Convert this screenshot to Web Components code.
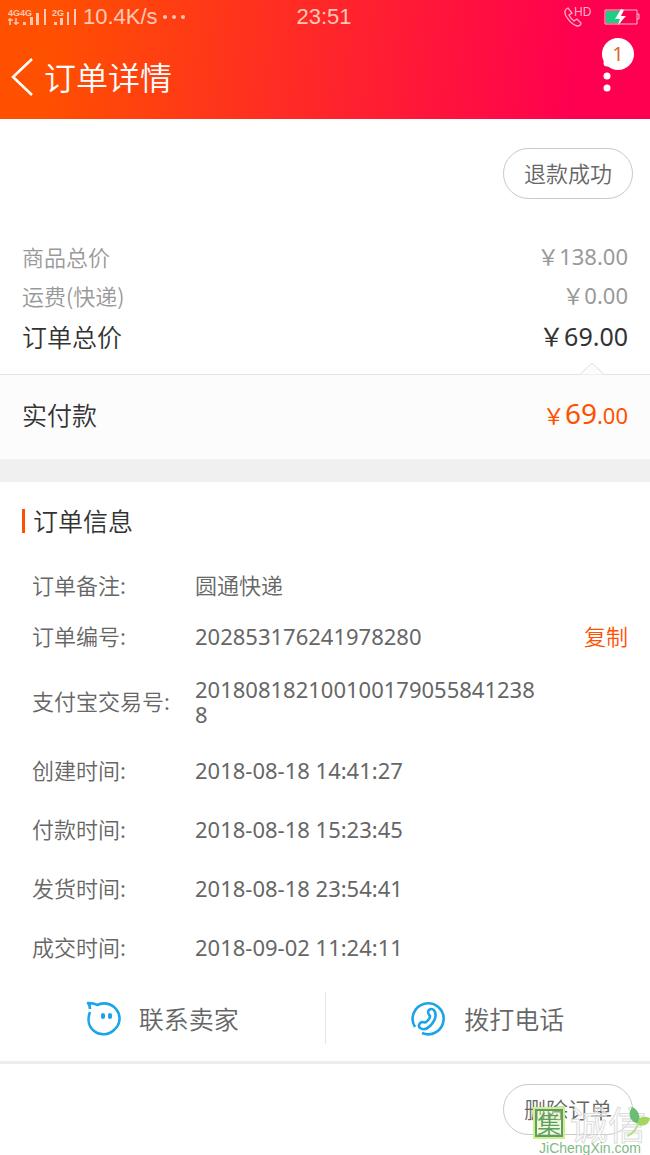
<!DOCTYPE html>
<html lang="zh-CN">
<head>
<meta charset="utf-8">
<meta name="viewport" content="width=device-width, initial-scale=1">
<title>订单详情</title>
<style>
  body {
    margin: 0;
    background: #fff;
    color: #666;
    font: 350 22px/25px "Noto Sans", "Noto Sans CJK SC", sans-serif;
  }
</style>
</head>
<body>
<order-page></order-page>

<script>
  class StatusBar extends HTMLElement {
    constructor() {
      super();
      this.attachShadow({ mode: 'open' });
    }

    connectedCallback() {
      this.shadowRoot.innerHTML = `
        <style>
          :host {
            display: grid;
            grid-template-columns: 1fr auto 1fr;
            align-items: center;
            height: 34px;
            padding: 0 10px 0 8px;
            color: #ffc9b5;
            font: 22px/34px "Liberation Sans", Arial, sans-serif;
          }
          .side { display: flex; align-items: center; }
          .end { justify-content: flex-end; gap: 13px; }
          .speed { margin: 0 5px 0 6px; }
          svg { display: block; }
          svg text { font: 700 9px "Liberation Sans", Arial, sans-serif; }
        </style>
        <div class="side">
          <svg width="69" height="20" viewBox="0 0 69 20" fill="currentColor">
            <text x="0" y="9">4G4G</text>
            <path d="M2 11v7M0 13h5M8 11v7M6 16h5" stroke="currentColor" stroke-width="1.5"/>
            <path d="M15 15h3v3h-3zM22 10h3v8h-3zM28 6h3v12h-3zM36 2h2v16h-2z"/>
            <text x="44" y="9">2G</text>
            <path d="M46 15h3v3h-3zM52 11h3v7h-3zM59 5h2v13h-2zM66 2h2v16h-2z"/>
          </svg>
          <span class="speed">10.4K/s</span>
          <svg width="22" height="4" viewBox="0 0 22 4" fill="currentColor">
            <circle cx="2" cy="2" r="2"/><circle cx="11" cy="2" r="2"/><circle cx="20" cy="2" r="2"/>
          </svg>
        </div>
        <span>23:51</span>
        <div class="side end">
          <svg width="27" height="22" viewBox="0 0 27 22" fill="none" stroke="#ffb3c6" stroke-width="1.3">
            <path d="M4 2C1 3 0 6 2 10c3 5 7 9 11 10 2 0 4-1 4-3l-4-4-3 2c-2-1-4-4-5-6l3-2z"/>
            <text x="10" y="10" fill="#ffb3c6" stroke="none" style="font-weight:400;font-size:12px">HD</text>
          </svg>
          <svg width="36" height="18" viewBox="0 0 36 18">
            <path d="M1 2h32v14H1zM33 6h2v5h-2" fill="none" stroke="#ffc2cd"/>
            <path d="M2 3h15v12H2z" fill="#1fce85"/>
            <path d="M17 1l-6 10h5l-2 6 8-9h-5l3-6z" fill="#fff"/>
          </svg>
        </div>
      `;
    }
  }

  class PageHeader extends HTMLElement {
    constructor() {
      super();
      this.attachShadow({ mode: 'open' });
    }

    connectedCallback() {
      this.shadowRoot.innerHTML = `
        <style>
          :host {
            display: block;
            height: 119px;
            background: linear-gradient(96deg, #ff5000 8%, #ff0050 88%);
            color: #fff;
          }
          nav {
            display: flex;
            align-items: center;
            height: 85px;
            padding: 0 16px 0 11px;
          }
          button {
            padding: 0;
            border: 0;
            background: none;
            color: inherit;
          }
          svg { display: block; }
          h1 {
            flex: 1;
            margin: 0 0 0 10px;
            padding-bottom: 2px;
            font: 350 32px/40px "Noto Sans CJK SC", sans-serif;
          }
          .more {
            position: relative;
            align-self: flex-start;
            width: 33px;
            height: 60px;
          }
          .more svg { margin-top: 4px; }
          .badge {
            position: absolute;
            top: 4px;
            right: 0;
            width: 32px;
            height: 32px;
            border-radius: 50%;
            background: #fff;
            color: #d9672c;
            font: 20px/32px "Noto Sans", sans-serif;
            text-align: center;
          }
        </style>
        <slot name="status"></slot>
        <nav>
          <button aria-label="返回">
            <svg width="23" height="40" viewBox="0 0 23 40" fill="none" stroke="#fff" stroke-width="2.6">
              <path d="M21 2L2 20l19 18"/>
            </svg>
          </button>
          <h1><slot></slot></h1>
          <button class="more" aria-label="更多">
            <svg width="12" height="56" viewBox="0 0 12 56" fill="#fff">
              <circle cx="6" cy="25" r="3.5"/><circle cx="6" cy="38" r="3.5"/><circle cx="6" cy="50" r="3.5"/>
            </svg>
            <span class="badge">1</span>
          </button>
        </nav>
      `;
    }
  }

  class PillButton extends HTMLElement {
    constructor() {
      super();
      this.attachShadow({ mode: 'open' });
    }

    connectedCallback() {
      this.shadowRoot.innerHTML = `
        <style>
          :host { display: block; }
          button {
            display: block;
            height: 51px;
            padding: 0 20px;
            border: 1px solid #c8c8c8;
            border-radius: 26px;
            background: #fff;
            color: #666;
            font: inherit;
          }
        </style>
        <button><slot></slot></button>
      `;
    }
  }

  class PriceRow extends HTMLElement {
    constructor() {
      super();
      this.attachShadow({ mode: 'open' });
    }

    connectedCallback() {
      this.shadowRoot.innerHTML = `
        <style>
          :host {
            display: flex;
            align-items: center;
            justify-content: space-between;
            height: 39px;
            color: #999;
          }
          :host([total]) {
            height: 43px;
            color: #333;
            font-size: 25px;
          }
          :host([paid]) {
            height: 78px;
            padding: 0 22px 6px;
            border-top: 1px solid #e5e5e5;
            background: #fcfcfc;
            color: #333;
            font-size: 25px;
          }
          .label { font-family: "Noto Sans CJK SC", sans-serif; }
          .price {
            font-size: 22px;
            font-weight: 400;
          }
          :host([total]) .price { font-size: 25px; }
          :host([paid]) .price { color: #ff5000; }
          :host([paid]) .whole { font-size: 28px; }
        </style>
        <span class="label"><slot></slot></span>
        <span class="price">￥<span class="whole">${this.getAttribute('whole')}</span>.00</span>
      `;
    }
  }

  class InfoRow extends HTMLElement {
    constructor() {
      super();
      this.attachShadow({ mode: 'open' });
    }

    connectedCallback() {
      this.shadowRoot.innerHTML = `
        <style>
          :host {
            display: grid;
            grid-template-columns: 163px minmax(0, 344px) 1fr;
            align-items: center;
            height: 51px;
            padding: 0 22px 0 32px;
          }
          :host([tall]) { height: 79px; }
          :host([time]) { height: 59px; }
          .label {
            padding-bottom: 3px;
            font-family: "Noto Sans CJK SC", sans-serif;
          }
          .value {
            font-weight: 400;
            overflow-wrap: anywhere;
          }
          :host([note]) .value { font-weight: 350; }
          ::slotted(button) {
            padding: 0;
            border: 0;
            background: none;
            color: #ff5000;
            font: inherit;
            justify-self: end;
          }
        </style>
        <span class="label">${this.getAttribute('label')}:</span>
        <span class="value"><slot></slot></span>
        <slot name="action"></slot>
      `;
    }
  }

  class ContactLink extends HTMLElement {
    constructor() {
      super();
      this.attachShadow({ mode: 'open' });
    }

    connectedCallback() {
      const icons = {
        chat: `
          <path d="M4 11C1 19 3 26 8 30c6 5 15 4 20-1 7-6 7-15 2-21C25 2 17 1 11 4 8 2 5 2 2 2c2 2 2 4 2 6"/>
          <path d="M17 14v2M24 14v2" stroke-width="4" stroke-linecap="round"/>`,
        phone: `
          <path d="M4 26A15.500 15.500 0 1 1 11 32"/>
          <path d="M18 9c2-2 5-1 6 2 2 6-1 10-5 14-3 3-7 4-10 2-2-2-1-5 2-6 2 0 3 1 4 0 2-1 4-4 4-6-1-1-3-4-1-6z"/>`
      };
      this.shadowRoot.innerHTML = `
        <style>
          :host {
            display: flex;
            flex: 1;
            justify-content: center;
          }
          a {
            display: flex;
            align-items: center;
            gap: 18px;
            color: #666;
            font: 350 25px/52px "Noto Sans CJK SC", sans-serif;
            text-decoration: none;
          }
        </style>
        <a href="#">
          <svg width="35" height="35" viewBox="0 0 35 35" fill="none" stroke="#1ba4e8" stroke-width="2.6" stroke-linejoin="round">
            ${icons[this.getAttribute('icon')]}
          </svg>
          <slot></slot>
        </a>
      `;
    }
  }

  class SiteMark extends HTMLElement {
    constructor() {
      super();
      this.attachShadow({ mode: 'open' });
    }

    connectedCallback() {
      this.shadowRoot.innerHTML = `
        <style>
          :host {
            display: block;
            width: 120px;
            pointer-events: none;
          }
          .name {
            display: flex;
            align-items: center;
            height: 36px;
            padding-left: 5px;
            font: 400 38px/36px "Noto Sans CJK SC", sans-serif;
          }
          .seal {
            width: 24px;
            height: 24px;
            margin-right: 7px;
            border: 2px solid #5f9d62;
            outline: 2px solid #cbf08c;
            background: #d8f5a870;
            color: #5f9d62;
            font-size: 24px;
            font-weight: 350;
            line-height: 24px;
            text-align: center;
          }
          .outline {
            color: #ffffff70;
            -webkit-text-stroke: 1px #dcdcdc;
          }
          .leaf {
            position: absolute;
            top: 2px;
            right: 0;
          }
          .site {
            color: #7fba86;
            font: 14px/14px "Liberation Sans", Arial, sans-serif;
            text-align: center;
          }
        </style>
        <div class="name"><span class="seal">集</span><span class="outline">诚信</span></div>
        <div class="site">JiChengXin.com</div>
        <svg class="leaf" width="24" height="32" viewBox="0 0 24 32">
          <path d="M6 0c6 2 9 9 7 17C4 15 1 8 6 0z" fill="#6abd72"/>
          <path d="M12 18C11 11 16 8 24 11c-1 6-5 9-12 7z" fill="#a4d75c"/>
          <path d="M12 17c-2 5-4 9-11 12" fill="none" stroke="#b6df91" stroke-width="2"/>
        </svg>
      `;
    }
  }

  class OrderPage extends HTMLElement {
    constructor() {
      super();
      this.attachShadow({ mode: 'open' });
    }

    connectedCallback() {
      this.shadowRoot.innerHTML = `
        <style>
          :host { display: block; }
          .state {
            display: flex;
            justify-content: flex-end;
            padding: 29px 17px 38px;
          }
          .prices { padding: 0 22px; }
          .notch {
            display: block;
            margin: 4px 43px -1px auto;
            position: relative;
          }
          .band { height: 23px; background: #f0f0f0; }
          h2 {
            margin: 27px 22px;
            padding: 0 0 2px 8px;
            border-left: 3px solid #ff5000;
            color: #333;
            font: 350 25px/22px "Noto Sans CJK SC", sans-serif;
          }
          .contact {
            display: flex;
            margin: 15px 0 17px;
          }
          .contact > :first-child { border-right: 1px solid #e5e5e5; }
          footer {
            position: relative;
            display: flex;
            justify-content: flex-end;
            padding: 20px 17px;
            border-top: 3px solid #ededed;
          }
          site-mark {
            position: absolute;
            right: 0;
            top: 41px;
          }
        </style>
        <page-header>
          <status-bar slot="status"></status-bar>
          订单详情
        </page-header>
        <main>
          <div class="state"><pill-button>退款成功</pill-button></div>
          <section class="prices">
            <price-row whole="138">商品总价</price-row>
            <price-row whole="0">运费(快递)</price-row>
            <price-row whole="69" total>订单总价</price-row>
          </section>
          <svg class="notch" width="28" height="13" viewBox="0 0 28 13">
            <path d="M1 12.500L13 1l12 11.500" fill="#fcfcfc" stroke="#ddd"/>
          </svg>
          <price-row whole="69" paid>实付款</price-row>
          <div class="band"></div>
          <section>
            <h2>订单信息</h2>
            <info-row label="订单备注" note>圆通快递</info-row>
            <info-row label="订单编号">202853176241978280<button slot="action">复制</button></info-row>
            <info-row label="支付宝交易号" tall>2018081821001001790558412388</info-row>
            <info-row label="创建时间" time>2018-08-18 14:41:27</info-row>
            <info-row label="付款时间" time>2018-08-18 15:23:45</info-row>
            <info-row label="发货时间" time>2018-08-18 23:54:41</info-row>
            <info-row label="成交时间" time>2018-09-02 11:24:11</info-row>
          </section>
          <div class="contact">
            <contact-link icon="chat">联系卖家</contact-link>
            <contact-link icon="phone">拨打电话</contact-link>
          </div>
        </main>
        <footer>
          <pill-button>删除订单</pill-button>
          <site-mark></site-mark>
        </footer>
      `;
    }
  }

  customElements.define('status-bar', StatusBar);
  customElements.define('page-header', PageHeader);
  customElements.define('pill-button', PillButton);
  customElements.define('price-row', PriceRow);
  customElements.define('info-row', InfoRow);
  customElements.define('contact-link', ContactLink);
  customElements.define('site-mark', SiteMark);
  customElements.define('order-page', OrderPage);
</script>
</body>
</html>
